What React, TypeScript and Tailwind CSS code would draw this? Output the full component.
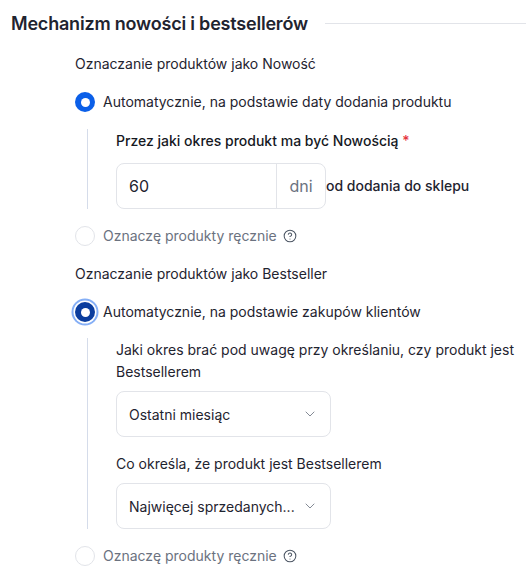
import { ChevronDown, CircleHelp } from 'lucide-react';

const RadioOn = ({ focused }: { focused?: boolean }) => (
    <span className={focused
        ? "w-5 h-5 shrink-0 rounded-full bg-[#0b3d9e] flex items-center justify-center shadow-[0_0_0_1.5px_#fff,0_0_0_3.5px_#85aff6]"
        : "w-5 h-5 shrink-0 rounded-full bg-[#0b5fe8] flex items-center justify-center"}>
        <span className="w-[9px] h-[9px] rounded-full bg-white" />
    </span>
);

const ManualOption = () => (
    <div className="flex items-center h-5 text-[#6b7280]">
        <span className="w-5 h-5 shrink-0 rounded-full border border-[#e2e4e9] bg-white" />
        <span className="ml-2 text-sm">Oznaczę produkty ręcznie</span>
        <CircleHelp size={14} strokeWidth={1.75} className="ml-[6px] text-[#4b5563]" />
    </div>
);

const Select = ({ value }: { value: string }) => (
    <div className="w-[215px] h-[46px] border border-[#e2e4e9] rounded-lg flex items-center justify-between pl-3 pr-3 text-sm text-[#1f2430]">
        <span className="pt-0.5">{value}</span>
        <ChevronDown size={16} strokeWidth={1.25} className="text-[#6b7280] -mt-px" />
    </div>
);

export default function App() {
    return (
        <div className="w-[526px] h-[578px] overflow-hidden bg-white text-[#1f2430] font-['Inter',sans-serif]">
            <div className="flex items-center pl-[11px] pt-[12px] h-[35px]">
                <h2 className="text-lg leading-[22px] font-semibold tracking-[-0.2px] whitespace-nowrap">Mechanizm nowości i bestsellerów</h2>
                <div className="ml-[17px] flex-1 h-px bg-[#e2e4e9]" />
            </div>

            <div className="pl-[75px] pt-[18px]">
                <div className="text-sm leading-[22px]">Oznaczanie produktów jako Nowość</div>

                <div className="flex items-center h-5 mt-[17px]">
                    <RadioOn />
                    <span className="ml-2 text-sm">Automatycznie, na podstawie daty dodania produktu</span>
                </div>

                <div className="ml-3 mt-[17px] h-[80px] border-l border-[#d5dcea] pl-[28px]">
                    <div className="text-sm leading-[22px] font-medium whitespace-nowrap h-[34px] pt-px text-[#16191f]">
                        Przez jaki okres produkt ma być Nowością <span className="text-[#e5343d]">*</span>
                    </div>
                    <div className="flex items-center whitespace-nowrap">
                        <div className="w-[210px] h-[46px] border border-[#e2e4e9] rounded-lg flex items-center text-sm">
                            <span className="flex-1 pl-3 text-base">60</span>
                            <span className="h-full w-[49px] border-l border-[#e2e4e9] flex items-center justify-center text-base text-[#6b7280]">dni</span>
                        </div>
                        <span className="text-sm font-medium">od dodania do sklepu</span>
                    </div>
                </div>

                <div className="mt-[17px]"><ManualOption /></div>

                <div className="text-sm leading-[22px] mt-[17px]">Oznaczanie produktów jako Bestseller</div>

                <div className="flex items-center h-5 mt-[17px]">
                    <RadioOn focused />
                    <span className="ml-2 text-sm">Automatycznie, na podstawie zakupów klientów</span>
                </div>

                <div className="ml-3 mt-[16px] h-[191px] border-l border-[#d5dcea] pl-[28px]">
                    <div className="text-sm leading-[22px] pt-px">
                        Jaki okres brać pod uwagę przy określaniu, czy produkt jest<br />Bestsellerem
                    </div>
                    <div className="mt-2"><Select value="Ostatni miesiąc" /></div>
                    <div className="text-sm leading-[22px] mt-4">Co określa, że produkt jest Bestsellerem</div>
                    <div className="mt-2"><Select value="Najwięcej sprzedanych..." /></div>
                </div>

                <div className="mt-[17px]"><ManualOption /></div>
            </div>
        </div>
    );
}
